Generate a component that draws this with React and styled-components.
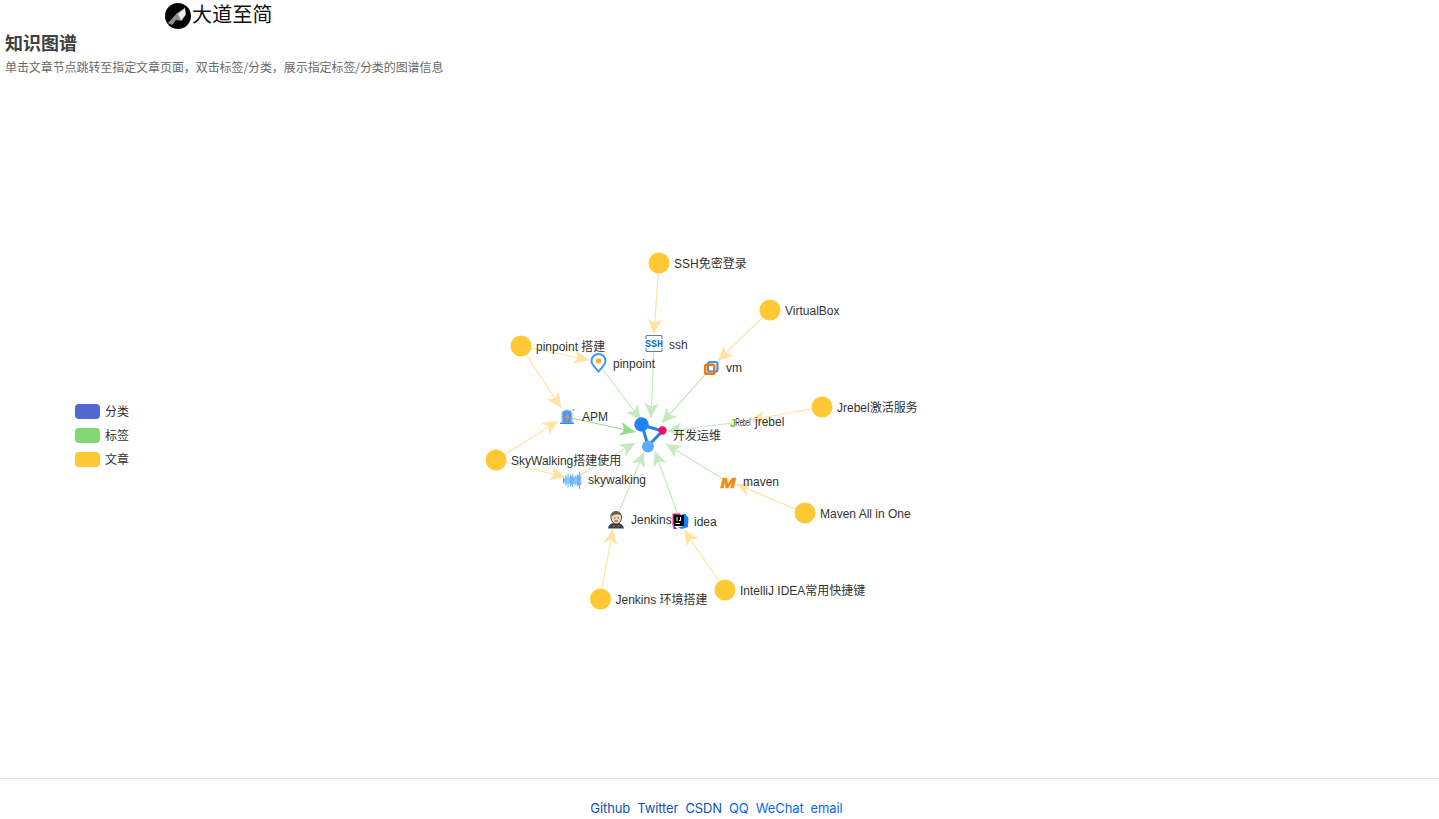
import React from "react";
import styled, { createGlobalStyle } from "styled-components";

const Global = createGlobalStyle`
  html, body { margin: 0; padding: 0; background: #fff; }
  body { font-family: "Liberation Sans", "Noto Sans CJK SC", sans-serif; color: #333; overflow: hidden; }
`;

const Page = styled.div`
  height: 819px;
  display: flex;
  flex-direction: column;
`;

const Header = styled.header`
  height: 29px;
  padding: 1px 0 0 165px;
  display: flex;
  align-items: center;
  gap: 1px;
`;

const SiteName = styled.span`
  font-size: 20px;
  line-height: 26px;
  letter-spacing: 0.2px;
  color: #111;
  font-family: "Noto Sans CJK SC", sans-serif;
  margin-top: -4px;
`;

const Intro = styled.div`
  padding: 0 0 0 5px;
  height: 58px;
`;

const Heading = styled.h2`
  margin: 0;
  font-size: 18px;
  line-height: 24px;
  font-weight: 700;
  color: #404040;
  font-family: "Noto Sans CJK SC", sans-serif;
`;

const Hint = styled.p`
  margin: 4px 0 0;
  font-size: 12px;
  line-height: 18px;
  letter-spacing: -0.08px;
  color: #6a6a6a;
  font-family: "Noto Sans CJK SC", sans-serif;
`;

const Chart = styled.section`
  position: relative;
  flex: 1;
  min-height: 0;
  svg { display: block; }
`;

const Legend = styled.ul`
  position: absolute;
  left: 75px;
  top: 316px;
  margin: 0;
  padding: 0;
  list-style: none;
  display: flex;
  flex-direction: column;
  gap: 9px;
`;

const LegendItem = styled.li`
  display: flex;
  align-items: center;
  gap: 5px;
  height: 15px;
  font-size: 12px;
  line-height: 14px;
  color: #333;
`;

const Swatch = styled.span`
  width: 25px;
  height: 15px;
  border-radius: 4px;
  background: ${(p) => p.$color};
`;

const Footer = styled.footer`
  border-top: 1px solid #e4e4e4;
  display: flex;
  justify-content: center;
  padding: 20px 6px 0 0;
  gap: 7px;
  flex: none;
  height: 20px;
`;

const FootLink = styled.a`
  font-family: Inter, "Liberation Sans", sans-serif;
  font-size: 13px;
  line-height: 18px;
  letter-spacing: -0.1px;
  text-decoration: none;
  color: ${(p) => (p.$dim ? "#0b52b8" : "#0a68f5")};
`;

const Label = styled.text`
  font-size: 12px;
  fill: #333;
  dominant-baseline: middle;
  font-family: "Liberation Sans", "Noto Sans CJK SC", sans-serif;
`;

const YELLOW = "#ffc936";
const EDGE_Y = "#ffe3a3";
const EDGE_G = "#c5eabf";

const articles = [
  { x: 659, y: 263, label: "SSH免密登录" },
  { x: 770, y: 310, label: "VirtualBox" },
  { x: 521, y: 346, label: "pinpoint 搭建" },
  { x: 822, y: 407, label: "Jrebel激活服务" },
  { x: 496, y: 460, label: "SkyWalking搭建使用" },
  { x: 805, y: 513, label: "Maven All in One" },
  { x: 725, y: 590, label: "IntelliJ IDEA常用快捷键" },
  { x: 600.5, y: 599, label: "Jenkins 环境搭建" },
];

// from x, from y, arrow tip x, arrow tip y
const yellowEdges = [
  [659, 263, 654, 334],
  [770, 310, 718, 361],
  [521, 346, 589, 360],
  [521, 346, 561, 408],
  [496, 460, 558, 421],
  [496, 460, 565, 477],
  [822, 407, 750, 420],
  [805, 513, 736, 484],
  [725, 590, 684, 530],
  [600, 599, 613, 529],
];

const greenEdges = [
  [654, 344, 651, 418],
  [598, 363, 641, 420],
  [711, 368, 662, 423],
  [741, 422, 667, 431],
  [728, 482, 666, 444],
  [680, 521, 655, 451],
  [616, 519, 644, 452],
  [572, 480, 635, 443],
];

const Edge = ({ d, color }) => {
  const [x1, y1, x2, y2] = d;
  const a = (Math.atan2(y2 - y1, x2 - x1) * 180) / Math.PI;
  return (
    <g>
      <line x1={x1} y1={y1} x2={x2} y2={y2} stroke={color} strokeWidth="1.2" />
      <polygon
        points="0,0 -15,-7 -11,0 -15,7"
        fill={color}
        transform={`translate(${x2} ${y2}) rotate(${a})`}
      />
    </g>
  );
};

const SshIcon = () => (
  <g transform="translate(645 335)">
    <path d="M1 4V1.5Q1 .5 2 .5H16Q17 .5 17 1.5V4M1 13V15.5Q1 16.5 2 16.5H16Q17 16.5 17 15.5V13" fill="none" stroke="#5a7ea6" strokeWidth="1.1" />
    <text x="9" y="12" textAnchor="middle" fontSize="10" fontWeight="700" fontFamily="Liberation Mono, monospace" fill="#1273c4">SSH</text>
  </g>
);

const VmIcon = () => (
  <g transform="translate(704 361)">
    <rect x="4" y="1" width="9.5" height="9.5" rx="2" fill="none" stroke="#4a90e2" strokeWidth="2.2" />
    <rect x="1.2" y="3.8" width="9" height="9" rx="1.5" fill="none" stroke="#f5750f" strokeWidth="2.6" />
    <rect x="5" y="5.5" width="4" height="3.5" fill="#fff" />
  </g>
);

const PinIcon = () => (
  <g transform="translate(590 353)">
    <path d="M8.5 18.5C5 14.5 1.5 11.5 1.5 8A7 7 0 0 1 15.5 8C15.5 11.5 12 14.5 8.5 18.5Z" fill="#fff" stroke="#3d97f5" strokeWidth="2" strokeLinejoin="round" />
    <circle cx="8.5" cy="8" r="2.8" fill="#f9b42a" />
  </g>
);

const ApmIcon = () => (
  <g transform="translate(558 408)">
    <path d="M4 15V6Q4 2 9 2Q14 2 14 6V15Z" fill="#4f97ee" stroke="#9ccbfb" strokeWidth="1.2" />
    <rect x="2" y="14.6" width="14" height="1.4" fill="#3b88e8" />
    <path d="M9.8 5 6.6 10H9L8.2 14 11.6 8.8H9.3Z" fill="#f7931e" />
    <circle cx="15.5" cy="2" r="1" fill="#f58a1f" />
  </g>
);

const JrebelIcon = () => (
  <g>
    <text x="730" y="426.5" fontSize="11" fontWeight="700" fill="#6bbf1f" fontFamily="Liberation Sans, sans-serif">J</text>
    <text x="735.5" y="426" fontSize="10" fill="#222" fontFamily="Liberation Sans, sans-serif" textLength="15" lengthAdjust="spacingAndGlyphs">Rebel</text>
  </g>
);

const MavenIcon = () => (
  <text x="728" y="487.5" textAnchor="middle" fontSize="15" fontWeight="700" fontStyle="italic" fill="#f58a0b" stroke="#f58a0b" strokeWidth="0.7" fontFamily="Liberation Sans, sans-serif" textLength="15" lengthAdjust="spacingAndGlyphs">M</text>
);

const waveBars = [6, 4, 11, 7, 14, 6, 12, 9, 13, 7, 10, 8, 12, 10, 17, 9];

const WaveIcon = () => (
  <g stroke="#4aa5fb" strokeWidth="0.9">
    {waveBars.map((h, i) => (
      <line key={i} x1={563.5 + i * 1.15} x2={563.5 + i * 1.15} y1={480.5 - h / 2} y2={480.5 + h / 2} />
    ))}
  </g>
);

const JenkinsIcon = () => (
  <g transform="translate(607 510)">
    <path d="M1 18.5Q1.5 14 6 13H12Q16 14 17 18.5Z" fill="#2f4652" />
    <path d="M4 8Q3 2 9 1.5Q15 2 14.5 8.5Q13.5 14 9 14Q5 13.5 4 8Z" fill="#f2d9b8" stroke="#4a3d33" strokeWidth="0.9" />
    <path d="M4.2 6.5Q5 1.5 9 1.5Q13 1.5 14.4 5.5Q10 3.5 7 5Q5.5 5.5 4.2 6.5Z" fill="#6d5a49" />
    <path d="M7 8H8.4M10.5 8H12M7.5 11H11" stroke="#4a3d33" strokeWidth="0.9" />
    <rect x="6" y="15.4" width="2" height="1.6" fill="#d33833" />
    <rect x="10.5" y="15.4" width="2" height="1.6" fill="#d33833" />
  </g>
);

const IdeaIcon = () => (
  <g transform="translate(672 513)">
    <path d="M.5 .5 8 .5 9 2 2 2 2 11 .5 14Z" fill="#f0146e" />
    <path d="M10 1.5 13 .5 16.5 5 16 14 10 16 6 14.5 12 13Z" fill="#1a7df0" />
    <path d="M1 11.5 5.5 16H1.5Z" fill="#8a2cf0" />
    <rect x="2" y="2" width="10" height="11" fill="#000" />
    <path d="M3.5 10.5H8" stroke="#fff" strokeWidth="1" />
    <path d="M5 4V8M8.5 4V7.5H7" stroke="#fff" strokeWidth="1" fill="none" />
  </g>
);

const CenterIcon = () => (
  <g>
    <path d="M642 425 662.5 431 648 446Z" fill="none" stroke="#2681f2" strokeWidth="3" />
    <circle cx="641.5" cy="424.5" r="7.2" fill="#2382f8" />
    <circle cx="648" cy="446.5" r="6" fill="#5cabfa" />
    <circle cx="662.5" cy="430.5" r="4.2" fill="#f0106c" />
  </g>
);

const tagLabels = [
  { x: 669, y: 346, label: "ssh" },
  { x: 726, y: 369, label: "vm" },
  { x: 613, y: 365, label: "pinpoint" },
  { x: 582, y: 418, label: "APM" },
  { x: 755, y: 423, label: "jrebel" },
  { x: 743, y: 483, label: "maven" },
  { x: 588, y: 481, label: "skywalking" },
  { x: 631, y: 521, label: "Jenkins" },
  { x: 694, y: 523, label: "idea" },
  { x: 673, y: 437, label: "开发运维" },
];

const legend = [
  { name: "分类", color: "#5568d2" },
  { name: "标签", color: "#80d873" },
  { name: "文章", color: YELLOW },
];

const links = [
  { name: "Github", dim: true },
  { name: "Twitter", dim: true },
  { name: "CSDN", dim: true },
  { name: "QQ" },
  { name: "WeChat" },
  { name: "email" },
];

const App = () => (
  <Page>
    <Global />
    <Header>
      <svg width="26" height="26" viewBox="0 0 26 26">
        <circle cx="13" cy="13" r="13" fill="#050505" />
        <path d="M3 20 12 10 20 5 21 11 17 18 11 17 7 22Z" fill="#8f8f8f" />
        <path d="M13 11 20 5 20.5 12 16 17Z" fill="#eee" />
      </svg>
      <SiteName>大道至简</SiteName>
    </Header>
    <Intro>
      <Heading>知识图谱</Heading>
      <Hint>单击文章节点跳转至指定文章页面，双击标签/分类，展示指定标签/分类的图谱信息</Hint>
    </Intro>
    <Chart>
      <svg width="1439" height="690" viewBox="0 88 1439 690">
        {greenEdges.map((d, i) => (
          <Edge key={i} d={d} color={EDGE_G} />
        ))}
        <Edge d={[567, 417, 635, 432]} color="#95dd8b" />
        {yellowEdges.map((d, i) => (
          <Edge key={i} d={d} color={EDGE_Y} />
        ))}
        {articles.map((n) => (
          <circle key={n.label} cx={n.x} cy={n.y} r="10.5" fill={YELLOW} />
        ))}
        <SshIcon />
        <VmIcon />
        <PinIcon />
        <ApmIcon />
        <JrebelIcon />
        <MavenIcon />
        <WaveIcon />
        <JenkinsIcon />
        <CenterIcon />
        {articles.map((n) => (
          <Label key={n.label} x={n.x + 15} y={n.y + 1.5}>
            {n.label}
          </Label>
        ))}
        {tagLabels.map((n) => (
          <Label key={n.label} x={n.x} y={n.y}>
            {n.label}
          </Label>
        ))}
        <IdeaIcon />
      </svg>
      <Legend>
        {legend.map((l) => (
          <LegendItem key={l.name}>
            <Swatch $color={l.color} />
            {l.name}
          </LegendItem>
        ))}
      </Legend>
    </Chart>
    <Footer>
      {links.map((l) => (
        <FootLink key={l.name} href="#" $dim={l.dim}>
          {l.name}
        </FootLink>
      ))}
    </Footer>
  </Page>
);

export default App;
